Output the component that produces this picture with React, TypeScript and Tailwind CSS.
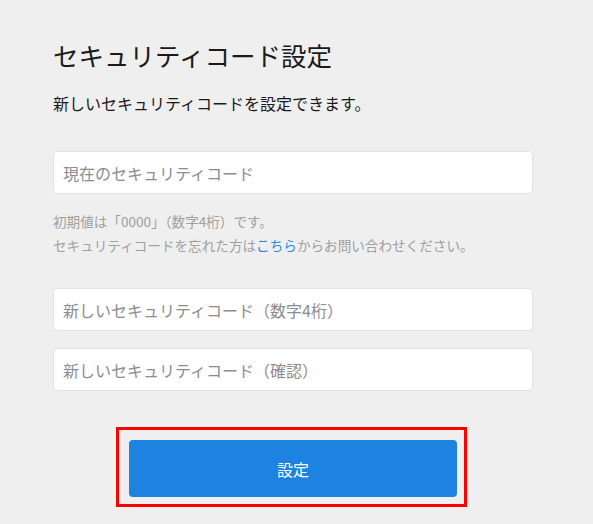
import React from 'react';

const FIELDS = [
  "新しいセキュリティコード（数字4桁）",
  "新しいセキュリティコード（確認）",
];

export default function App() {
  return (
    <div
      className="min-h-[524px] w-full bg-[#efefef]"
      style={{ fontFamily: '"Noto Sans CJK JP", "Noto Sans", sans-serif' }}
    >
      <div className="ml-[53px] w-[480px] pt-[37px]">
        <h1 className="text-[25.5px] leading-[36px] text-[#1a1a1a] font-normal">セキュリティコード設定</h1>
        <p className="mt-[18px] text-[16px] leading-[24px] text-[#1a1a1a]">
          新しいセキュリティコードを設定できます。
        </p>

        {/* current code */}
        <input
          type="password"
          placeholder="現在のセキュリティコード"
          className="mt-[36px] block h-[43px] w-full rounded-[4px] border border-[#e2e2e2] bg-white px-[9px] text-[16px] placeholder:text-[#8c8c8c] outline-none"
        />
        <div className="mt-[15px] text-[13.6px] leading-[24px] text-[#a0a0a0]">
          <p>初期値は「0000」（数字4桁）です。</p>
          <p>
            セキュリティコードを忘れた方は<a href="#" className="text-[#2a8ae2]">こちら</a>からお問い合わせください。
          </p>
        </div>

        {/* new code */}
        <div className="mt-[31px] flex flex-col gap-[17px]">
          {FIELDS.map((f) => (
            <input
              key={f}
              type="password"
              placeholder={f}
              className="block h-[43px] w-full rounded-[4px] border border-[#e2e2e2] bg-white px-[9px] text-[16px] placeholder:text-[#8c8c8c] outline-none"
            />
          ))}
        </div>

        {/* submit (highlighted) */}
        <div className="mt-[36px] ml-[63px] w-[351px] border-[3px] border-[#ff0000] pl-[10px] pr-[7px] pt-[10px] pb-[7px]">
          <button className="h-[57px] w-[328px] rounded-[4px] bg-[#1e82e0] text-[16px] text-white">
            設定
          </button>
        </div>
      </div>
    </div>
  );
}
